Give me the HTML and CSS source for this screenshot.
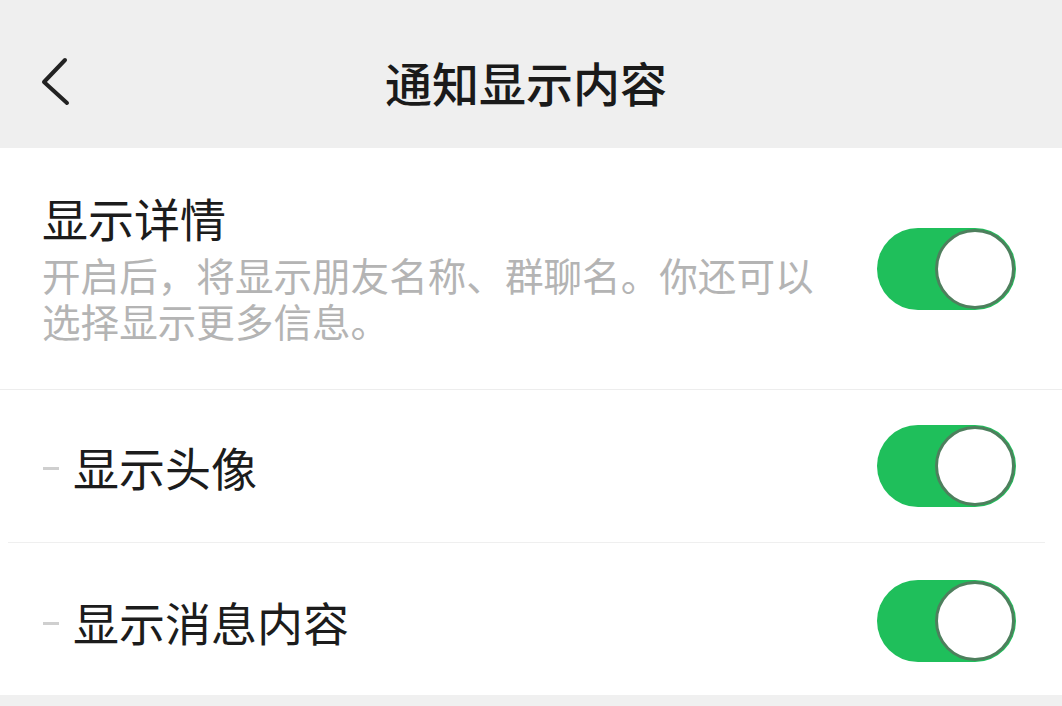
FILE: index.html
```html
<!DOCTYPE html>
<html lang="zh-CN">
<head>
<meta charset="utf-8">
<title>通知显示内容</title>
<link rel="stylesheet" href="styles.css">
</head>
<body>
<div class="page">
  <header class="nav">
    <div class="nav-left">
      <svg class="back" width="32" height="52" viewBox="0 0 32 52" aria-hidden="true">
        <path d="M25 4 L4 26 L27 47" fill="none" stroke="#222" stroke-width="4" stroke-linecap="round" stroke-linejoin="round"/>
      </svg>
    </div>
    <h1 class="nav-title">通知显示内容</h1>
    <div class="nav-right"></div>
  </header>
  <main class="list">
    <div class="row row-main">
      <div class="row-text">
        <div class="label">显示详情</div>
        <div class="desc">
          <div class="desc-line">开启后，将显示朋友名称、群聊名。你还可以</div>
          <div class="desc-line">选择显示更多信息。</div>
        </div>
      </div>
      <div class="switch"><span class="knob"></span></div>
    </div>
    <div class="row row-sub row-sub-first">
      <div class="label"><span class="dash"></span>显示头像</div>
      <div class="switch"><span class="knob"></span></div>
    </div>
    <div class="row row-sub row-sub-last">
      <div class="label"><span class="dash"></span>显示消息内容</div>
      <div class="switch"><span class="knob"></span></div>
    </div>
  </main>
  <div class="footer-band"></div>
</div>
</body>
</html>
```

FILE: styles.css
```css
* { box-sizing: border-box; }
html, body {
  margin: 0;
  padding: 0;
  background: #ffffff;
}
body {
  font-family: "Noto Sans CJK SC", "Noto Sans", sans-serif;
  width: 1062px;
  height: 706px;
  overflow: hidden;
}
.page {
  display: flex;
  flex-direction: column;
  height: 706px;
}
.nav {
  height: 148px;
  background: #efefef;
  padding-top: 16px;
  display: grid;
  grid-template-columns: 1fr auto 1fr;
  align-items: center;
}
.nav-left {
  padding-left: 40px;
  display: flex;
  align-items: center;
}
.back { display: block; }
.nav-title {
  margin: 0;
  font-size: 47px;
  line-height: 60px;
  font-weight: 500;
  color: #1a1a1a;
  transform: translateX(-5px);
}
.list {
  flex: 1;
  background: #ffffff;
  display: flex;
  flex-direction: column;
}
.row {
  display: flex;
  align-items: center;
  justify-content: space-between;
  padding-left: 42px;
  padding-right: 46px;
}
.row-main {
  height: 242px;
  padding-bottom: 8px;
  border-bottom: 1.5px solid #ededed;
}
.row-main .switch {
  margin-top: 8px;
}
.row-text {
  display: flex;
  flex-direction: column;
  gap: 4px;
}
.label {
  font-size: 46px;
  line-height: 60px;
  color: #1c1c1c;
  display: flex;
  align-items: center;
}
.desc {
  display: flex;
  flex-direction: column;
  gap: 0;
}
.desc-line {
  font-size: 38.6px;
  line-height: 46px;
  height: 46px;
  color: #b4b4b4;
  white-space: nowrap;
}
.row-sub {
  height: 153px;
  padding-left: 43px;
}
.row-sub-first {
  border-bottom: 1.5px solid #efefef;
  margin-left: 8px;
  margin-right: 17px;
  padding-left: 35px;
  padding-right: 29px;
}
.row-sub-last {
  height: 152px;
  padding-top: 4px;
}
.dash {
  display: inline-block;
  width: 16px;
  height: 3px;
  background: #cfcfcf;
  margin-right: 14px;
  margin-top: 4px;
}
.switch {
  width: 139px;
  height: 82px;
  border-radius: 41px;
  background: #1fbf5b;
  display: flex;
  align-items: center;
  justify-content: flex-end;
  padding: 1px;
}
.knob {
  width: 80px;
  height: 80px;
  border-radius: 50%;
  background: #ffffff;
  border: 3px solid #4e7f5d;
}
.footer-band {
  height: 11px;
  background: #f0f0f0;
}
```
